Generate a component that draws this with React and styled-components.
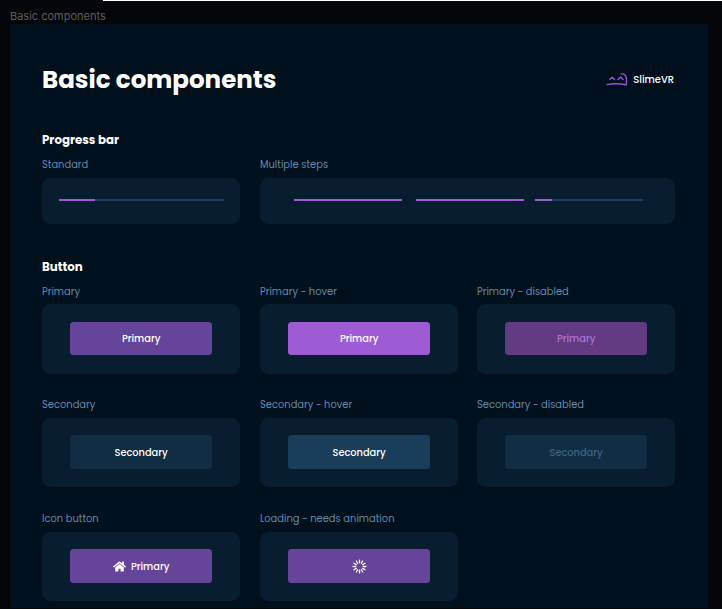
import React from "react";
import styled, { createGlobalStyle } from "styled-components";
import { FaHome } from "react-icons/fa";

const GlobalStyle = createGlobalStyle`
  * { box-sizing: border-box; }
  body {
    margin: 0;
    background: #040609;
    font-family: Poppins, Inter, sans-serif;
    overflow: hidden;
  }
`;

const Canvas = styled.div`
  width: 722px;
  height: 609px;
  overflow: hidden;
`;

const TopStrip = styled.div`
  height: 1px;
  margin-left: 103px;
  background: #fff;
`;

const FrameName = styled.div`
  height: 23px;
  padding: 8px 0 0 10px;
  font: 400 11px/15px Inter, sans-serif;
  color: #5b5c5f;
`;

const Frame = styled.main`
  width: 698px;
  height: 584px;
  margin-left: 10px;
  padding: 35px 33px 0 32px;
  background: #00101c;
`;

const Header = styled.header`
  display: flex;
  align-items: center;
  justify-content: space-between;
  height: 42px;
`;

const Title = styled.h1`
  margin: 0;
  font-size: 24.55px;
  line-height: 42px;
  font-weight: 700;
  color: #fff;
`;

const Brand = styled.div`
  display: flex;
  align-items: center;
  gap: 5px;
  margin: -1px 1px 0 0;
  font-size: 9.9px;
  line-height: 15px;
  font-weight: 500;
  color: #fff;
`;

const Section = styled.section`
  padding-top: ${(p) => p.$top}px;
`;

const SectionTitle = styled.h2`
  margin: 0;
  font-size: 11.8px;
  line-height: 18px;
  font-weight: 700;
  color: #fff;
`;

const Grid = styled.div`
  display: grid;
  grid-template-columns: 218px 217px 198px;
  row-gap: 23.6px;
  margin-top: 8px;
`;

const Example = styled.div`
  grid-column: span ${(p) => p.$span || 1};
`;

const Label = styled.div`
  height: 20.5px;
  font-size: 9.92px;
  line-height: 15px;
  color: #608aab;
`;

const Card = styled.div`
  display: flex;
  align-items: center;
  justify-content: center;
  width: ${(p) => p.$width || 198}px;
  height: ${(p) => p.$height}px;
  border-radius: 8.5px;
  background: #081e30;
`;

const Steps = styled.div`
  display: grid;
  grid-template-columns: 122px 119.4px 107.6px;
  margin-left: 2px;
`;

const Track = styled.div`
  width: ${(p) => p.$width}px;
  height: 2px;
  margin-top: -2px;
  background: #1a3d59;
  overflow: hidden;
`;

const Fill = styled.div`
  width: ${(p) => p.$value}%;
  height: 2px;
  background: #9d5cd4;
`;

const variants = {
  primary: ["#65459a", "#fff"],
  primaryHover: ["#9d5cd4", "#fff"],
  primaryDisabled: ["#623b83", "#a873d6"],
  secondary: ["#112d43", "#fff"],
  secondaryHover: ["#1a3d59", "#fff"],
  secondaryDisabled: ["#112d43", "#3d6381"],
};

const Button = styled.button`
  display: flex;
  align-items: center;
  justify-content: center;
  gap: 5px;
  width: 142.4px;
  height: 33.5px;
  margin: -0.8px 0.5px 0 0;
  padding: 0 0 0 0.8px;
  border: 0;
  border-radius: 3.5px;
  font: 500 9.8px/15px Poppins, Inter, sans-serif;
  background: ${(p) => variants[p.$variant][0]};
  color: ${(p) => variants[p.$variant][1]};
`;

const SlimeLogo = () => (
  <svg width="22" height="15" viewBox="0 0 22 15" fill="none" stroke="#9654d1" strokeWidth="1.4" strokeLinecap="round" strokeLinejoin="round">
    <path d="M1 12.6C6 11.5 14 11.6 20.3 12.8C20.8 8.5 20.9 3.8 18.4 2.4C17.2 1.7 16 1.8 15.2 2.1" />
    <path d="M3.8 7.5L6.1 5.2L8.6 7.5M12 7.5L14.5 5.1L17.1 7.5" />
  </svg>
);

const Spinner = () => (
  <svg width="15" height="15" viewBox="-7.5 -7.5 15 15" stroke="#fff" strokeWidth="1.3" strokeLinecap="round">
    {Array.from({ length: 12 }, (_, i) => (
      <line key={i} x1="0" y1="-3.7" x2="0" y2="-6.4" transform={`rotate(${i * 30})`} />
    ))}
  </svg>
);

const buttons = [
  ["Primary", "Primary", "primary"],
  ["Primary - hover", "Primary", "primaryHover"],
  ["Primary - disabled", "Primary", "primaryDisabled"],
  ["Secondary", "Secondary", "secondary"],
  ["Secondary - hover", "Secondary", "secondaryHover"],
  ["Secondary - disabled", "Secondary", "secondaryDisabled"],
  ["Icon button", <><FaHome size={13} />Primary</>, "primary"],
  ["Loading - needs animation", <Spinner />, "primary"],
];

const Progress = ({ width, value }) => (
  <Track $width={width}>
    <Fill $value={value} />
  </Track>
);

export default function App() {
  return (
    <Canvas>
      <GlobalStyle />
      <TopStrip />
      <FrameName>Basic components</FrameName>
      <Frame>
        <Header>
          <Title>Basic components</Title>
          <Brand>
            <SlimeLogo />
            SlimeVR
          </Brand>
        </Header>
        <Section $top={30}>
          <SectionTitle>Progress bar</SectionTitle>
          <Grid>
            <Example>
              <Label>Standard</Label>
              <Card $height={46.5}>
                <Progress width={165} value={22} />
              </Card>
            </Example>
            <Example $span={2}>
              <Label>Multiple steps</Label>
              <Card $height={46.5} $width={415}>
                <Steps>
                  <Progress width={108} value={100} />
                  <Progress width={107.6} value={100} />
                  <Progress width={107.6} value={15} />
                </Steps>
              </Card>
            </Example>
          </Grid>
        </Section>
        <Section $top={33.5}>
          <SectionTitle>Button</SectionTitle>
          <Grid>
            {buttons.map(([label, content, variant]) => (
              <Example key={label}>
                <Label>{label}</Label>
                <Card $height={69.7}>
                  <Button $variant={variant}>{content}</Button>
                </Card>
              </Example>
            ))}
          </Grid>
        </Section>
      </Frame>
    </Canvas>
  );
}
